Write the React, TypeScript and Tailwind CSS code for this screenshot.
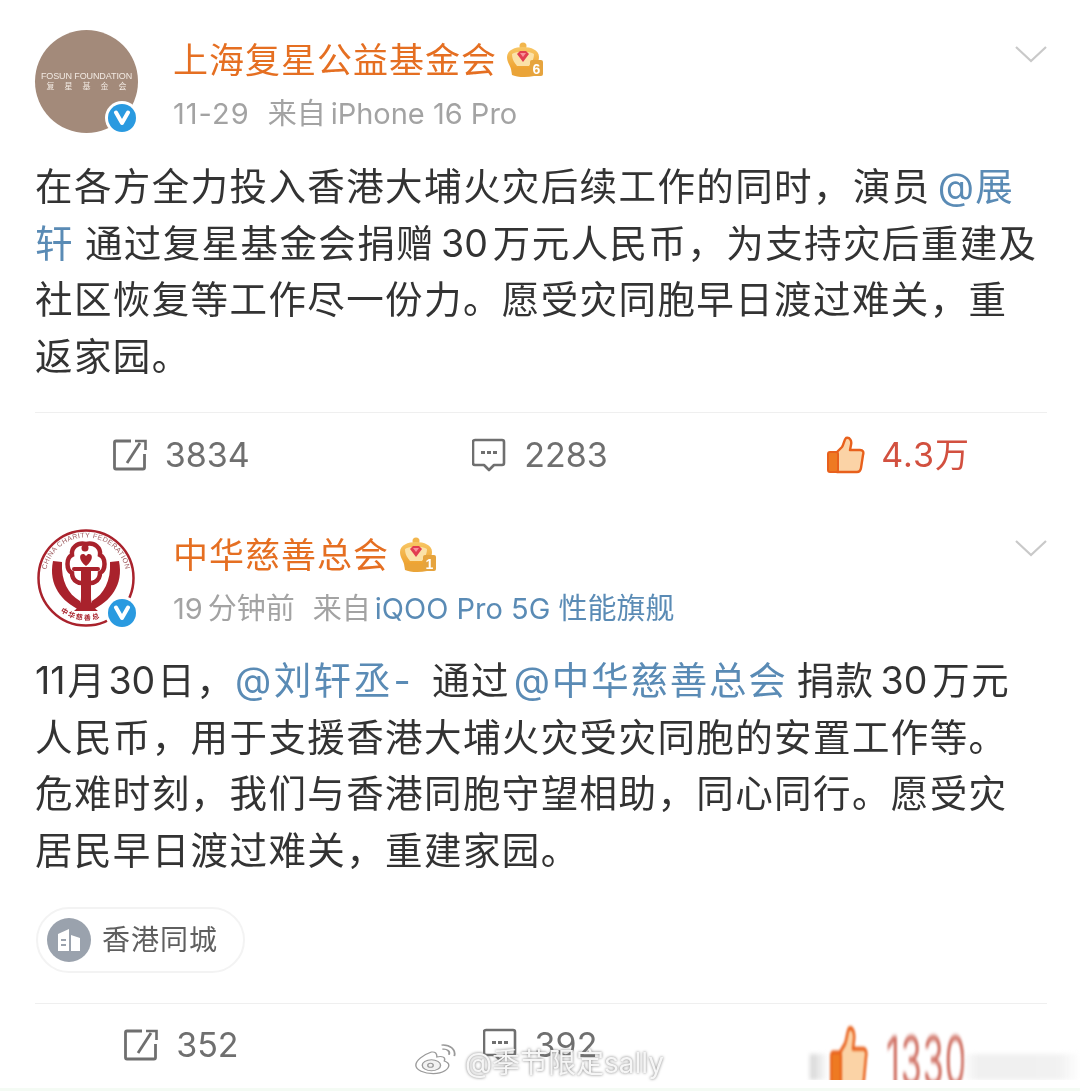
const font = { fontFamily: '"Inter","Noto Sans CJK SC",sans-serif' };

function VBadge({ className }: { className: string }) {
  return (
    <div className={`absolute w-[34px] h-[34px] rounded-full bg-white flex items-center justify-center ${className}`}>
      <div className="w-[28px] h-[28px] rounded-full bg-[#2a9ae0] flex items-center justify-center">
        <svg width="18" height="16" viewBox="0 0 18 16"><path d="M3 2.5 L9 13 L15 2.5" fill="none" stroke="#fff" strokeWidth="4" strokeLinejoin="round" strokeLinecap="round" /></svg>
      </div>
    </div>
  );
}

function Crown({ n }: { n: string }) {
  return (
    <svg width="38" height="38" viewBox="0 0 38 38">
      <defs>
        <linearGradient id={`g${n}`} x1="0" y1="0" x2="0" y2="1">
          <stop offset="0" stopColor="#f8c766" />
          <stop offset="1" stopColor="#eea331" />
        </linearGradient>
      </defs>
      <circle cx="17" cy="5" r="3.5" fill="#f2b64d" />
      <path d="M17 6 C9 6 1 9 1 16 C1 21 4 24 5 28 L29 28 C30 24 33 21 33 16 C33 9 25 6 17 6 Z" fill={`url(#g${n})`} />
      <path d="M6 13 C6 19 9 22 11 25 L23 25 C25 22 28 19 28 13 C24 10 10 10 6 13 Z" fill="#fbe2a8" />
      <path d="M11 13 L14 10 L20 10 L23 13 L17 21 Z" fill="#e23d50" />
      <path d="M14 12 L20 12 L17 16 Z" fill="#f8909a" />
      <path d="M5 28 L28 28 L28 35 C20 37 10 36 6 34 Z" fill="#eaa438" />
      <rect x="24" y="19" width="13" height="16" rx="2" fill="#e6a43e" />
      <text x="30.5" y="33" textAnchor="middle" fontSize="14" fontWeight="700" fill="#fff" fontFamily="Liberation Sans, sans-serif">{n}</text>
    </svg>
  );
}

function Chevron({ className }: { className: string }) {
  return (
    <svg width="34" height="20" viewBox="0 0 34 20" className={`mr-[32px] ml-auto shrink-0 ${className}`}>
      <path d="M2 3 L17 17 L32 3" fill="none" stroke="#c9c9c9" strokeWidth="2.2" />
    </svg>
  );
}

function ShareIcon() {
  return (
    <svg width="34" height="32" viewBox="0 0 34 32" className="shrink-0">
      <path d="M18 2 H3 Q1.500 2 1.500 3.500 V28.500 Q1.500 30 3 30 H30 Q31.500 30 31.500 28.500 V15" fill="none" stroke="#6f6f6f" strokeWidth="2.8" />
      <path d="M14 24 L27 4" fill="none" stroke="#6f6f6f" strokeWidth="2.8" />
      <path d="M22 2 H32.500 V11" fill="none" stroke="#6f6f6f" strokeWidth="2.6" />
    </svg>
  );
}

function CommentIcon() {
  return (
    <svg width="34" height="34" viewBox="0 0 34 34" className="shrink-0">
      <path d="M3 2 H30 Q32 2 32 4 V25 Q32 27 30 27 H22 L17 32 L12 27 H3 Q1 27 1 25 V4 Q1 2 3 2 Z" fill="none" stroke="#6f6f6f" strokeWidth="2.6" strokeLinejoin="round" />
      <rect x="9" y="13" width="4" height="3" fill="#6f6f6f" />
      <rect x="15" y="13" width="4" height="3" fill="#6f6f6f" />
      <rect x="21" y="13" width="4" height="3" fill="#6f6f6f" />
    </svg>
  );
}

function ThumbIcon() {
  return (
    <svg width="38" height="38" viewBox="0 0 38 38" className="shrink-0 block">
      <path d="M10 16 L15 11 C17 8 17 4 19 2 C23 1 25 5 24 9 L23 14 L33 14 C36 14 37 16 36 19 L34 32 C33.500 35 32 36 30 36 L10 36 Z" fill="#fbd3a6" stroke="#e8601c" strokeWidth="2.4" strokeLinejoin="round" />
      <rect x="1" y="16" width="10" height="20" rx="2" fill="#ee7a22" stroke="#e8601c" strokeWidth="2" />
    </svg>
  );
}

function Action({ icon, label }: { icon: React.ReactNode; label: string }) {
  return (
    <div className="flex items-center justify-center gap-[18px]">
      {icon}
      <span className="text-[34px] leading-[40px] text-[#6f6f6f]">{label}</span>
    </div>
  );
}

function Avatar1() {
  return (
    <div className="relative w-[103px] h-[103px] shrink-0">
      <div className="w-full h-full rounded-full bg-[#a38a7a] flex flex-col items-center justify-center text-[#f1e9e2] font-['Liberation_Sans','Noto_Sans_CJK_SC',sans-serif]">
        <div className="text-[9px] leading-[11px] mt-[-1px] whitespace-nowrap tracking-[-0.100px]">FOSUN FOUNDATION</div>
        <div className="text-[8px] leading-[10px] tracking-[10px] ml-[10px] whitespace-nowrap">复星基金会</div>
      </div>
      <VBadge className="left-[70px] top-[71px]" />
    </div>
  );
}

function Avatar2() {
  return (
    <div className="relative w-[103px] h-[103px] shrink-0">
      <svg width="103" height="103" viewBox="0 0 103 103">
        <circle cx="51" cy="51" r="47.500" fill="#fff" stroke="#a9222c" strokeWidth="2.500" />
        <defs>
          <path id="arc1" d="M13.800 67 A40.500 40.500 0 1 1 88.200 67" />
          <path id="arc2" d="M14 72 A43 43 0 0 0 88 72" />
        </defs>
        <text fontSize="7" fill="#9c5a5e" fontFamily="Liberation Sans, sans-serif" letterSpacing="0.4" textAnchor="middle">
          <textPath href="#arc1" startOffset="50%">CHINA CHARITY FEDERATION</textPath>
        </text>
        <text fontSize="7" fontWeight="700" fill="#a9222c" fontFamily="Noto Sans CJK SC, sans-serif" letterSpacing="1.500">
          <textPath href="#arc2" startOffset="17">中华慈善总</textPath>
        </text>
        <path d="M18 34 C13 58 27 75 45 83 L45 74 C33 67 26 54 27 35 Z" fill="#a9222c" />
        <path d="M84 34 C89 58 75 75 57 83 L57 74 C69 67 76 54 75 35 Z" fill="#a9222c" />
        <path d="M51 17 C42 15 36 21 37 28 C31 31 31 43 37 46 C37 54 45 58 50 55 L52 55 C57 58 65 54 65 46 C71 43 71 31 65 28 C66 21 60 15 51 17 Z" fill="none" stroke="#a9222c" strokeWidth="4.500" />
        <circle cx="50" cy="21" r="3.500" fill="#a9222c" />
        <path d="M51 39 C43 33 44 26 49 27 L51 29 L53 27 C58 26 59 33 51 39 Z" fill="#a9222c" />
        <rect x="37" y="40" width="28" height="4" rx="2" fill="#a9222c" />
        <path d="M46 44 H56 V70 C56 76 58 80 63 84 H39 C44 80 46 76 46 70 Z" fill="#a9222c" />
      </svg>
      <VBadge className="left-[70px] top-[69px]" />
    </div>
  );
}

function Link({ children, className = "" }: { children: React.ReactNode; className?: string }) {
  return <span className={`text-[#5a8bb5] ${className}`}>{children}</span>;
}

function Body({ children }: { children: React.ReactNode }) {
  return (
    <p className="mx-[35px] text-[37.500px] leading-[56.500px] tracking-[1.400px] text-[#333] whitespace-nowrap">{children}</p>
  );
}

export default function App() {
  return (
    <div className="relative w-[1080px] h-[1091px] overflow-hidden bg-white blur-[0.6px]" style={font}>
      {/* Post 1 */}
      <section className="h-[494px] pt-[30px]">
        <div className="flex pl-[35px] h-[103px]">
          <Avatar1 />
          <div className="ml-[35px]">
            <div className="flex items-center h-[60px]">
              <span className="text-[35px] tracking-[1px] text-[#e56f22] leading-[60px]">上海复星公益基金会</span>
              <span className="ml-[9px]"><Crown n="6" /></span>
            </div>
            <div className="text-[29px] leading-[44px] mt-[2px] text-[#a3a3a3] whitespace-nowrap"><span className="tracking-[1px]">11-29</span><span className="ml-[18px]">来自<span className="ml-[5px]">iPhone 16 Pro</span></span></div>
          </div>
          <Chevron className="mt-[14px]" />
        </div>
        <div className="mt-[26px]">
          <Body>
            在各方全力投入香港大埔火灾后续工作的同时，<span className="ml-[1px]">演员</span><Link className="ml-[7px]">@展</Link><br />
            <Link>轩</Link><span className="ml-[11px]">通过复星基金会捐赠</span><span className="ml-[6px] mr-[5px] tracking-normal">30</span>万元人民币，为支持灾后重建及<br />
            社区恢复等工作尽一份力。愿受灾同胞早日渡过难关，重<br />
            返家园。
          </Body>
        </div>
        <div className="mt-[27px] ml-[35px] mr-[33px] h-[1px] bg-[#efefef]" />
        <div className="mx-[2px] w-[1076px] h-[84px] grid grid-cols-3 items-center">
          <Action icon={<ShareIcon />} label="3834" />
          <Action icon={<CommentIcon />} label="2283" />
          <div className="flex items-center justify-center gap-[16px]">
            <ThumbIcon />
            <span className="text-[34px] leading-[40px] tracking-[1px] text-[#d2503f]">4.3万</span>
          </div>
        </div>
      </section>
      {/* Post 2 */}
      <section className="pt-[33px]">
        <div className="flex pl-[35px] h-[103px]">
          <Avatar2 />
          <div className="ml-[35px] mt-[-2px]">
            <div className="flex items-center h-[60px]">
              <span className="text-[35px] tracking-[1px] text-[#e56f22] leading-[60px]">中华慈善总会</span>
              <span className="ml-[10px]"><Crown n="1" /></span>
            </div>
            <div className="text-[29px] leading-[44px] mt-[2px] text-[#a3a3a3] whitespace-nowrap">19<span className="ml-[5px]">分钟前</span><span className="ml-[18px]">来自<Link className="ml-[4px]">iQOO Pro 5G 性能旗舰</Link></span></div>
          </div>
          <Chevron className="mt-[11px]" />
        </div>
        <div className="mt-[23px]">
          <Body>
            <span className="tracking-normal mr-[2px]">11</span>月<span className="tracking-normal mx-[2px]">30</span>日，<Link className="tracking-[2.400px]">@刘轩丞-</Link><span className="ml-[19px]">通过</span><Link className="ml-[4px] tracking-[1.800px]">@中华慈善总会</Link><span className="ml-[9px]">捐款</span><span className="ml-[6px] mr-[5px] tracking-normal">30</span>万元<br />
            人民币，用于支援香港大埔火灾受灾同胞的安置工作等。<br />
            危难时刻，我们与香港同胞守望相助，同心同行。愿受灾<br />
            居民早日渡过难关，重建家园。
          </Body>
        </div>
        <div className="mt-[28px] ml-[36px] w-[209px] h-[66px] rounded-full border-2 border-[#f3f3f3] flex items-center pl-[9px]">
          <div className="w-[44px] h-[44px] rounded-full bg-[#9aa2ad] flex items-center justify-center">
            <svg width="24" height="24" viewBox="0 0 24 24">
              <path d="M1 6 L12 1 V23 H1 Z" fill="#fff" />
              <path d="M14 7 L23 10 V23 H14 Z" fill="#fff" />
              <rect x="4" y="11" width="5" height="2" fill="#9aa2ad" />
              <rect x="4" y="16" width="5" height="2" fill="#9aa2ad" />
            </svg>
          </div>
          <span className="ml-[11px] text-[28px] text-[#5f5f5f] tracking-[1px]">香港同城</span>
        </div>
        <div className="mt-[30px] ml-[35px] mr-[33px] h-[1px] bg-[#efefef]" />
        <div className="mx-[2px] w-[1076px] h-[82px] grid grid-cols-3 items-center">
          <Action icon={<ShareIcon />} label="352" />
          <Action icon={<CommentIcon />} label="392" />
          <div className="flex justify-center items-start gap-[18px] h-[40px]">
            <div className="scale-y-[1.7] origin-top blur-[0.8px]"><ThumbIcon /></div>
            <span className="text-[34px] leading-[40px] tracking-[1px] mt-[4px] text-[#cf6f62] scale-y-[2] origin-[50%_8px] blur-[1px]">1330</span>
          </div>
        </div>
      </section>
      {/* smeared strip at the picture's lower right */}
      <div className="absolute left-[810px] top-[1054px] w-[270px] h-[26px] blur-[2px] bg-[linear-gradient(to_right,#d4d4d4,transparent_7%,transparent_56%,#f0f0f0_62%,#f1f1f1_92%,transparent)]" />
      <div className="absolute left-[760px] top-[1080px] w-[320px] h-[8px] bg-white" />
      <div className="absolute left-0 bottom-0 w-full h-[3px] bg-[#f4fbf4]" />
      {/* watermark */}
      <div className="absolute left-[414px] top-[1040px] flex text-[28px] leading-[46px] text-[#f6f6f6] [text-shadow:0_0_3px_#777] whitespace-nowrap">
        <svg width="44" height="32" viewBox="0 0 48 46" preserveAspectRatio="none" className="shrink-0 mt-[3px]">
          <path d="M19 13 C10 17 2 25 2 32 C2 39 11 44 21 44 C32 44 38 37 38 32 C38 29 35 27 33 26 C35 21 31 18 25 20 C25 15 23 12 19 13 Z" fill="#fff" stroke="#9a9a9a" strokeWidth="1.500" />
          <ellipse cx="19" cy="32" rx="10" ry="8" fill="#f2f2f2" stroke="#9a9a9a" strokeWidth="1.500" />
          <circle cx="18" cy="32" r="3" fill="none" stroke="#9a9a9a" strokeWidth="1.500" />
          <path d="M30 3 C39 2 46 9 44 19 M31 9 C36 8 40 12 38 17" fill="none" stroke="#9a9a9a" strokeWidth="2" />
        </svg>
        <span className="ml-[7px]">@季节限定sally</span>
      </div>
    </div>
  );
}
